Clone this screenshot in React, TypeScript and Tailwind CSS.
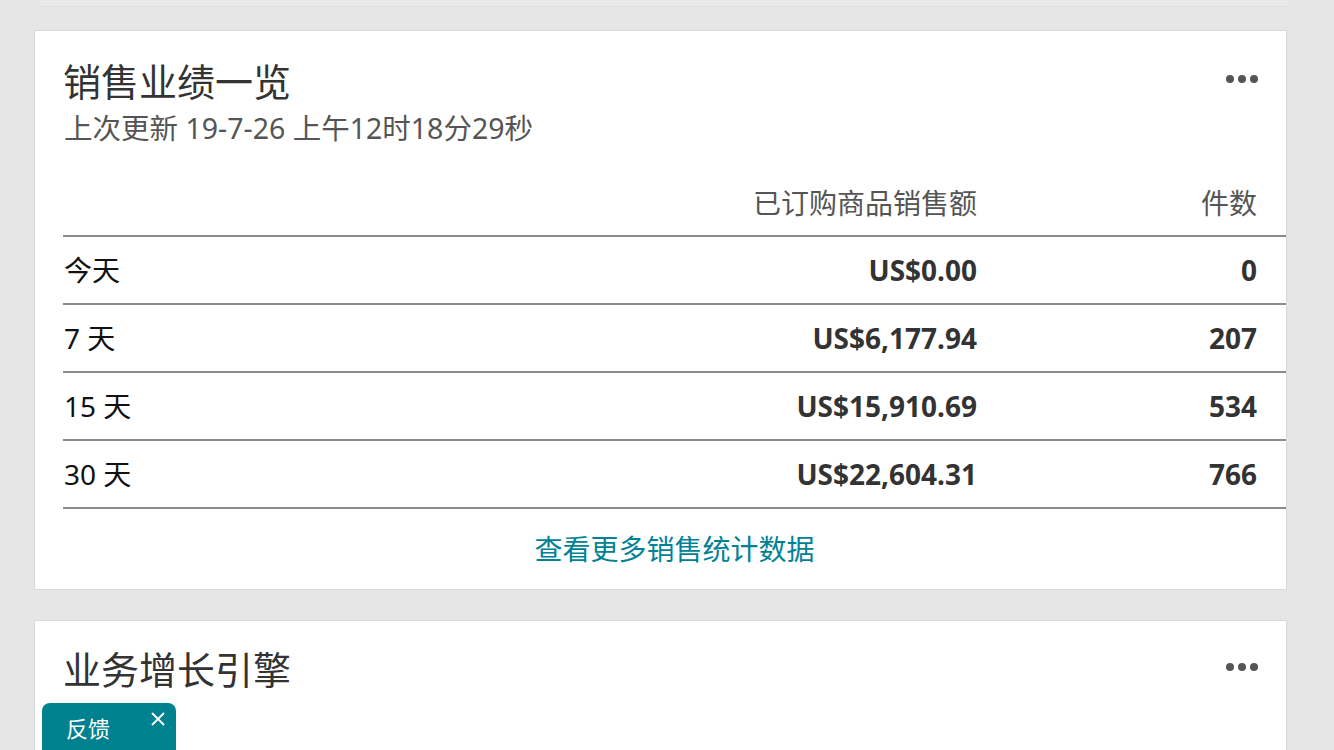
import { X } from "lucide-react";

const rows = [
  { label: "今天", amount: "US$0.00", units: "0" },
  { label: "7 天", amount: "US$6,177.94", units: "207" },
  { label: "15 天", amount: "US$15,910.69", units: "534" },
  { label: "30 天", amount: "US$22,604.31", units: "766" },
];

function Dots() {
  return (
    <div className="flex items-center gap-[4px]">
      <span className="h-[8px] w-[8px] rounded-full bg-[#555]" />
      <span className="h-[8px] w-[8px] rounded-full bg-[#555]" />
      <span className="h-[8px] w-[8px] rounded-full bg-[#555]" />
    </div>
  );
}

function CardHeader({ title }: { title: string }) {
  return (
    <div className="flex items-start justify-between pr-[28px]">
      <h2 className="text-[38px] leading-[44px] font-normal text-[#333]">{title}</h2>
      <div className="pt-[16px]">
        <Dots />
      </div>
    </div>
  );
}

export default function App() {
  return (
    <div
      className="relative h-[750px] w-[1334px] overflow-hidden bg-[#e6e6e6]"
      style={{ fontFamily: '"Noto Sans", "Noto Sans CJK SC", sans-serif' }}
    >
      {/* bottom edge of the card above */}
      <div className="ml-[40px] mr-[46px] h-[7px] border-b border-[#e0e0e0] bg-[#e9e9e9]" />

      <div className="flex flex-col gap-[30px] pl-[34px] pr-[47px] pt-[23px]">
        <section className="border border-[#d9d9d9] bg-white pl-[28px] pt-[28px]">
          <CardHeader title="销售业绩一览" />
          <p className="mt-[8px] pl-[1px] text-[28.5px] leading-[34px] text-[#555]">
            上次更新 19-7-26 上午12时18分29秒
          </p>

          <div className="mt-[41px] flex items-center border-b-2 border-[#8c8c8c] pb-[15px] text-[28px] leading-[34px] text-[#555]">
            <div className="flex-1" />
            <div className="text-right">已订购商品销售额</div>
            <div className="w-[309px] pr-[29px] text-right">件数</div>
          </div>

          {rows.map((r) => (
            <div
              key={r.label}
              className="flex h-[68px] items-center border-b-2 border-[#8c8c8c] text-[28px] leading-[34px] text-[#111]"
            >
              <div className="flex-1 pl-[1px]">{r.label}</div>
              <div className="text-right font-bold text-[#333]">{r.amount}</div>
              <div className="w-[309px] pr-[29px] text-right font-bold text-[#333]">{r.units}</div>
            </div>
          ))}

          <div className="flex h-[80px] items-center justify-center">
            <a className="text-[28px] leading-[34px] text-[#008296]">查看更多销售统计数据</a>
          </div>
        </section>

        <section className="h-[200px] border border-[#d9d9d9] bg-white pl-[28px] pt-[26px]">
          <CardHeader title="业务增长引擎" />
        </section>
      </div>

      {/* feedback tab */}
      <div className="absolute bottom-0 left-[42px] flex h-[47px] w-[134px] rounded-t-[8px] bg-[#00818f] text-white">
        <span className="pl-[24px] pt-[10px] text-[22px] leading-[30px]">反馈</span>
        <X className="absolute right-[7px] top-[5px] h-[22px] w-[22px]" strokeWidth={2} />
      </div>
    </div>
  );
}
